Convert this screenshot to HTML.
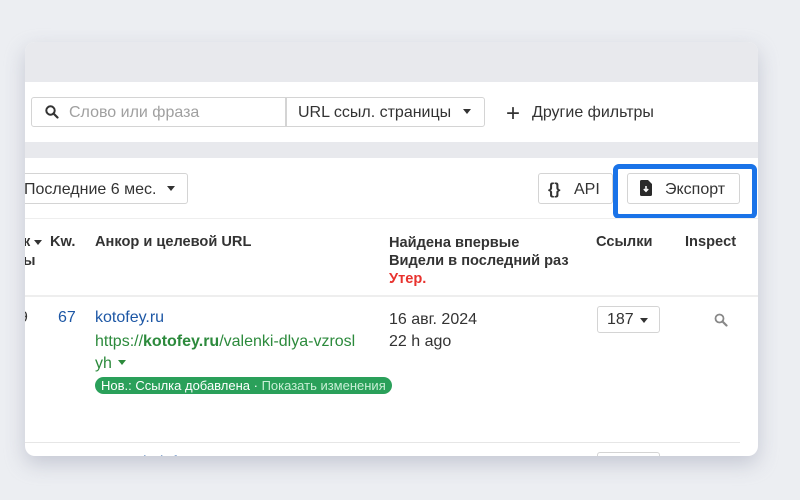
<!DOCTYPE html>
<html><head><meta charset="utf-8"><style>
*{box-sizing:border-box;margin:0;padding:0}
body{width:800px;height:500px;background:#eceef2;font-family:"Liberation Sans","Noto Sans CJK SC",sans-serif;color:#333;position:relative;overflow:hidden}
.card{position:absolute;left:25px;top:42px;width:733px;height:414px;background:#fff;border-radius:10px;overflow:hidden;box-shadow:0 8px 20px rgba(150,155,175,.45)}
.a{position:absolute}
.t{position:absolute;white-space:nowrap;transform:translateY(2px)}
.h{font-size:14.6px;font-weight:bold;color:#333}
</style></head><body>
<div class="card">
<div class="a" style="left:0;top:0;width:733px;height:40px;background:#e8e9ed"></div>
<div class="a" style="left:0;top:100px;width:733px;height:16px;background:#e8e9ed"></div>
<div class="a" style="left:6px;top:55px;width:256px;height:30px;border:1px solid #d4d4d4;border-radius:3px 0 0 3px"></div>
<svg class="a" style="left:20px;top:63px" width="14" height="14" viewBox="0 0 14 14"><circle cx="5.5" cy="5.5" r="4.2" fill="none" stroke="#333" stroke-width="2"/><path d="M8.5 8.5L12.5 12.5" stroke="#333" stroke-width="2.2" stroke-linecap="round"/></svg>
<div class="t" style="left:44px;top:60px;font-size:16px;color:#a0a0a0">Слово или фраза</div>
<div class="a" style="left:260px;top:55px;width:200px;height:30px;border:1px solid #d4d4d4;border-radius:0 3px 3px 0"></div>
<div class="t" style="left:273px;top:60px;font-size:16px;color:#333">URL ссыл. страницы</div>
<div class="a" style="left:438px;top:67px;border:4.5px solid transparent;border-top:5px solid #333;border-bottom:0"></div>
<div class="t" style="left:481px;top:56px;font-size:24px;color:#333;font-weight:300">+</div>
<div class="t" style="left:507px;top:60px;font-size:16px;color:#333">Другие фильтры</div>
<div class="a" style="left:-10px;top:131px;width:173px;height:31px;border:1px solid #d4d4d4;border-radius:3px"></div>
<div class="t" style="left:-1px;top:137px;font-size:16px;color:#333">Последние 6 мес.</div>
<div class="a" style="left:142px;top:144px;border:4.5px solid transparent;border-top:5px solid #333;border-bottom:0"></div>
<div class="a" style="left:513px;top:131px;width:75px;height:31px;border:1px solid #d4d4d4;border-radius:3px"></div>
<div class="t" style="left:523px;top:137px;font-size:16px;color:#333;font-weight:bold">{}</div>
<div class="t" style="left:549px;top:137px;font-size:16px;color:#333">API</div>
<div class="a" style="left:588px;top:122px;width:144px;height:55px;border:5px solid #1a73e8;border-radius:6px"></div>
<div class="a" style="left:602px;top:131px;width:113px;height:31px;border:1px solid #d4d4d4;border-radius:3px"></div>
<svg class="a" style="left:615px;top:138px" width="12" height="16" viewBox="0 0 12 16"><path d="M0 1.5Q0 0 1.5 0H8L12 4V14.5Q12 16 10.5 16H1.5Q0 16 0 14.5Z" fill="#2a2a2a"/><path d="M6 6V11M3.8 9L6 11.3 8.2 9" stroke="#fff" stroke-width="1.5" fill="none"/></svg>
<div class="t" style="left:640px;top:137px;font-size:16px;color:#333">Экспорт</div>
<div class="a" style="left:0;top:176px;width:733px;height:1px;background:#eee"></div>
<div class="t h" style="left:-2px;top:190px">к</div>
<div class="a" style="left:9px;top:198px;border:4.5px solid transparent;border-top:5px solid #333;border-bottom:0"></div>
<div class="t h" style="left:-2px;top:209px">ы</div>
<div class="t h" style="left:25px;top:190px">Kw.</div>
<div class="t h" style="left:70px;top:190px">Анкор и целевой URL</div>
<div class="t h" style="left:364px;top:190px;line-height:18px">Найдена впервые<br>Видели в последний раз<br><span style="color:#e8322e">Утер.</span></div>
<div class="t h" style="left:571px;top:190px">Ссылки</div>
<div class="t h" style="left:660px;top:190px">Inspect</div>
<div class="a" style="left:0;top:253px;width:733px;height:2px;background:#eee"></div>
<div class="t" style="left:-6px;top:265px;font-size:16px;color:#333">9</div>
<div class="t" style="left:33px;top:265px;font-size:16px;color:#1d57a5">67</div>
<div class="t" style="left:70px;top:265px;font-size:16px;color:#1d57a5">kotofey.ru</div>
<div class="t" style="left:70px;top:287px;font-size:16px;color:#2c8a3c;line-height:22px">https://<b>kotofey.ru</b>/valenki-dlya-vzrosl<br>yh</div>
<div class="a" style="left:93px;top:318px;border:4px solid transparent;border-top:5px solid #2c8a3c;border-bottom:0"></div>
<div class="t" style="left:70px;top:333px;height:17px;padding:0 6px;background:#2aa05a;border-radius:9px;font-size:13px;line-height:17px;color:#fff">Нов.: Ссылка добавлена · <span style="color:#c9efd6">Показать изменения</span></div>
<div class="t" style="left:364px;top:265px;font-size:16px;color:#333;line-height:22px">16 авг. 2024<br>22 h ago</div>
<div class="a" style="left:572px;top:264px;width:63px;height:27px;border:1px solid #d4d4d4;border-radius:3px"></div>
<div class="t" style="left:582px;top:267px;font-size:16px;color:#333">187</div>
<div class="a" style="left:615px;top:276px;border:4px solid transparent;border-top:5px solid #333;border-bottom:0"></div>
<svg class="a" style="left:689px;top:271px" width="14" height="14" viewBox="0 0 14 14"><circle cx="5.5" cy="5.5" r="4" fill="none" stroke="#888" stroke-width="1.8"/><path d="M8.5 8.5L12.5 12.5" stroke="#888" stroke-width="2.2" stroke-linecap="round"/></svg>
<div class="a" style="left:0;top:400px;width:715px;height:1px;background:#e6e6e6"></div>
<div class="a" style="left:572px;top:410px;width:63px;height:27px;border:1px solid #d4d4d4;border-radius:3px"></div>
<div class="t" style="left:33px;top:410px;font-size:16px;color:#1d57a5">11</div>
<div class="t" style="left:70px;top:410px;font-size:16px;color:#1d57a5">example.info</div>
<div class="t" style="left:364px;top:410px;font-size:16px;color:#333">16 авг. 2024</div>
</div>
</body></html>
